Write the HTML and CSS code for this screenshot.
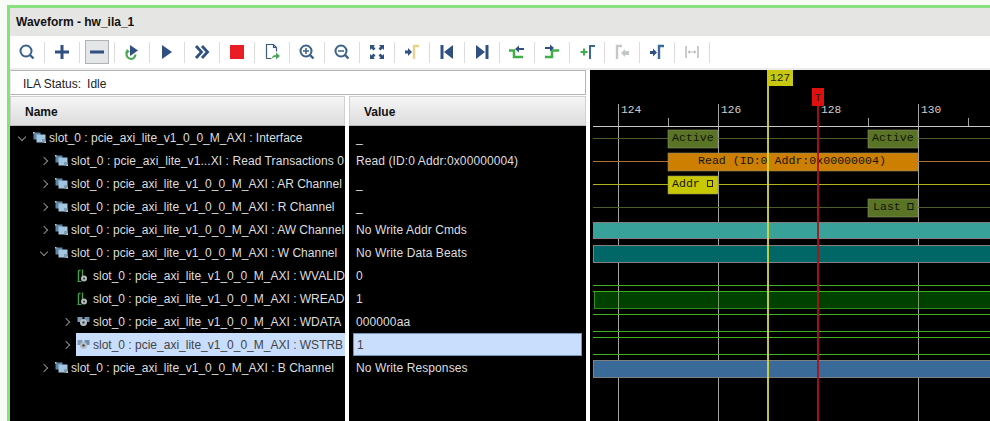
FILE: index.html
```html
<!DOCTYPE html>
<html lang="en">
<head>
    <meta charset="UTF-8">
    <title>Waveform - hw_ila_1</title>
    <link rel="stylesheet" href="styles.css">
</head>
<body>
    <svg class="defs" width="0" height="0">
        <defs>
            <g id="iconBus">
                <rect x="0.500" y="0.500" width="7" height="7" fill="#5d86a6"/>
                <rect x="3.500" y="2.500" width="9" height="8" fill="#a2c6e0"/>
                <rect x="9" y="7" width="3.500" height="3.500" fill="#7e9db4"/>
                <rect x="0" y="0" width="1.500" height="1.500" fill="#c8d0d4"/>
                <rect x="11.500" y="9.500" width="1.500" height="1.500" fill="#c8d0d4"/>
            </g>
            <g id="iconSignal">
                <path d="M1.500 12.500V1.500M1.500 1.500h2M5.500 0.500V7" stroke="#3fa04f" stroke-width="1.400" fill="none"/>
                <path d="M0.500 12.500h4" stroke="#3fa04f" stroke-width="1"/>
                <circle cx="7" cy="9.500" r="3" fill="#b4bcbc"/>
                <circle cx="7" cy="9.500" r="1" fill="#333"/>
            </g>
            <g id="iconVector">
                <rect x="0.500" y="1" width="5" height="5" fill="#7f9ab4"/>
                <rect x="7.500" y="1" width="5" height="5" fill="#6f8eae"/>
                <circle cx="6.500" cy="6.500" r="3.500" fill="#b4bec6"/>
                <circle cx="6.500" cy="6.500" r="1.200" fill="#444"/>
            </g>
        </defs>
    </svg>

    <div class="window">
        <div class="title-bar">Waveform - hw_ila_1</div>

        <div class="toolbar">
            <span class="tool"><svg width="20" height="20" viewBox="0 0 20 20"><circle cx="9" cy="9" r="5.500" fill="none" stroke="#3a6288" stroke-width="2"/><path d="M13 13l3.500 3.500" stroke="#3a6288" stroke-width="2.400"/></svg></span>
            <span class="tool"><svg width="20" height="20" viewBox="0 0 20 20"><path d="M10 3v14M3 10h14" stroke="#2f5080" stroke-width="3"/></svg></span>
            <span class="tool"><span class="tool-active"><svg width="20" height="20" viewBox="0 0 20 20"><path d="M3 10h14" stroke="#2f5080" stroke-width="3"/></svg></span></span>
            <span class="tool"><svg width="20" height="20" viewBox="0 0 20 20"><path d="M5.500 9.500a4.500 4.500 0 1 0 8 3" fill="none" stroke="#4aa858" stroke-width="2.200"/><path d="M3 11l2-4 3 3z" fill="#4aa858"/><path d="M8 3l8 5.500-8 5.500z" fill="#2f5080"/></svg></span>
            <span class="tool"><svg width="20" height="20" viewBox="0 0 20 20"><path d="M5 3l10 7-10 7z" fill="#2f5080"/></svg></span>
            <span class="tool"><svg width="20" height="20" viewBox="0 0 20 20"><path d="M4 4l5.500 6-5.500 6M10 4l5.500 6-5.500 6" fill="none" stroke="#2f5080" stroke-width="2.800"/></svg></span>
            <span class="tool"><svg width="20" height="20" viewBox="0 0 20 20"><rect x="3" y="3" width="14" height="14" fill="#ec1c24"/></svg></span>
            <span class="tool"><svg width="20" height="20" viewBox="0 0 20 20"><path d="M4.500 16.500V2.500h7l3 3v4M11.500 2.500v3h3M4.500 16.500h5" fill="none" stroke="#3a5a80" stroke-width="1.200"/><path d="M10 16.500c0-2.500 1.500-3.500 4-3.500v-2.500l4 3.500-4 3.500V15c-1.500 0-2.800.5-4 1.500z" fill="#4aa858"/></svg></span>
            <span class="tool"><svg width="20" height="20" viewBox="0 0 20 20"><circle cx="9" cy="9" r="5.500" fill="none" stroke="#3a6288" stroke-width="2"/><path d="M13 13l3.500 3.500" stroke="#3a6288" stroke-width="2.400"/><path d="M6 9h6M9 6v6" stroke="#3a6288" stroke-width="1.500"/></svg></span>
            <span class="tool"><svg width="20" height="20" viewBox="0 0 20 20"><circle cx="9" cy="9" r="5.500" fill="none" stroke="#3a6288" stroke-width="2"/><path d="M13 13l3.500 3.500" stroke="#3a6288" stroke-width="2.400"/><path d="M6 9h6" stroke="#3a6288" stroke-width="1.500"/></svg></span>
            <span class="tool"><svg width="20" height="20" viewBox="0 0 20 20"><path d="M3 3h5L6.500 4.500 8.500 6.500 6.500 8.500 4.500 6.500 3 8zM17 3v5l-1.500-1.500-2 2-2-2 2-2L12 3zM3 17v-5l1.500 1.500 2-2 2 2-2 2L8 17zM17 17h-5l1.500-1.500-2-2 2-2 2 2 1.500-1.500z" fill="#2f5080"/></svg></span>
            <span class="tool"><svg width="20" height="20" viewBox="0 0 20 20"><path d="M3 8.500h3V6l4 4-4 4v-2.500H3z" fill="#2f5080"/><path d="M12 17V4h5" fill="none" stroke="#e6d28a" stroke-width="2.400"/></svg></span>
            <span class="tool"><svg width="20" height="20" viewBox="0 0 20 20"><path d="M5 3v14" stroke="#2f5080" stroke-width="3"/><path d="M16 3v14L7 10z" fill="#2f5080"/></svg></span>
            <span class="tool"><svg width="20" height="20" viewBox="0 0 20 20"><path d="M15 3v14" stroke="#2f5080" stroke-width="3"/><path d="M4 3v14l9-7z" fill="#2f5080"/></svg></span>
            <span class="tool"><svg width="20" height="20" viewBox="0 0 20 20"><path d="M2 8.500h5V15h9" fill="none" stroke="#3fae49" stroke-width="2.500"/><path d="M17 6h-5V3.500L8 7l4 3.500V8h5z" fill="#2f5080"/></svg></span>
            <span class="tool"><svg width="20" height="20" viewBox="0 0 20 20"><path d="M3 15h7V8.500h7" fill="none" stroke="#3fae49" stroke-width="2.500"/><path d="M3 5h5V2.500L12 6l-4 3.500V7H3z" fill="#2f5080"/></svg></span>
            <span class="tool"><svg width="20" height="20" viewBox="0 0 20 20"><path d="M7 6.500v7M3.500 10h7" stroke="#3fae49" stroke-width="2"/><path d="M13 17V4h5" fill="none" stroke="#3a6a98" stroke-width="2"/></svg></span>
            <span class="tool"><svg width="20" height="20" viewBox="0 0 20 20"><path d="M5 17V4h5" fill="none" stroke="#c4c8c8" stroke-width="2.400"/><path d="M17 9h-4V7l-4 4 4 4v-2h4z" fill="#c4c8c8"/></svg></span>
            <span class="tool"><svg width="20" height="20" viewBox="0 0 20 20"><path d="M3 9h3V6.500l4 4-4 4V12H3z" fill="#2f5080"/><path d="M12 17V4h5" fill="none" stroke="#3a6a98" stroke-width="2.400"/></svg></span>
            <span class="tool"><svg width="20" height="20" viewBox="0 0 20 20"><path d="M4 4v12M16 4v12" stroke="#c8cccc" stroke-width="2"/><path d="M6 10h8" stroke="#b8bcbc" stroke-width="1"/><path d="M6 10l2-2v4zM14 10l-2-2v4z" fill="#b8bcbc"/></svg></span>
        </div>

        <div class="main">
            <div class="left-pane">
                <div class="status">ILA Status:<span class="status-value">Idle</span></div>
                <div class="columns">
                    <div class="name-col">
                        <div class="col-head">Name</div>
                        <div class="row lvl0"><i class="chev open"></i><svg class="ico" width="13" height="11"><use href="#iconBus"/></svg><span>slot_0 : pcie_axi_lite_v1_0_0_M_AXI : Interface</span></div>
                        <div class="row lvl1"><i class="chev"></i><svg class="ico" width="13" height="11"><use href="#iconBus"/></svg><span class="wide">slot_0 : pcie_axi_lite_v1...XI : Read Transactions 0</span></div>
                        <div class="row lvl1"><i class="chev"></i><svg class="ico" width="13" height="11"><use href="#iconBus"/></svg><span>slot_0 : pcie_axi_lite_v1_0_0_M_AXI : AR Channel</span></div>
                        <div class="row lvl1"><i class="chev"></i><svg class="ico" width="13" height="11"><use href="#iconBus"/></svg><span>slot_0 : pcie_axi_lite_v1_0_0_M_AXI : R Channel</span></div>
                        <div class="row lvl1"><i class="chev"></i><svg class="ico" width="13" height="11"><use href="#iconBus"/></svg><span>slot_0 : pcie_axi_lite_v1_0_0_M_AXI : AW Channel</span></div>
                        <div class="row lvl1"><i class="chev open"></i><svg class="ico" width="13" height="11"><use href="#iconBus"/></svg><span>slot_0 : pcie_axi_lite_v1_0_0_M_AXI : W Channel</span></div>
                        <div class="row lvl2"><i class="chev none"></i><svg class="ico" width="13" height="13"><use href="#iconSignal"/></svg><span>slot_0 : pcie_axi_lite_v1_0_0_M_AXI : WVALID</span></div>
                        <div class="row lvl2"><i class="chev none"></i><svg class="ico" width="13" height="13"><use href="#iconSignal"/></svg><span>slot_0 : pcie_axi_lite_v1_0_0_M_AXI : WREADY</span></div>
                        <div class="row lvl2"><i class="chev"></i><svg class="ico" width="13" height="11"><use href="#iconVector"/></svg><span>slot_0 : pcie_axi_lite_v1_0_0_M_AXI : WDATA</span></div>
                        <div class="row lvl2"><i class="chev"></i><div class="row-sel"><svg class="ico" width="13" height="11"><use href="#iconVector"/></svg><span>slot_0 : pcie_axi_lite_v1_0_0_M_AXI : WSTRB</span></div></div>
                        <div class="row lvl1"><i class="chev"></i><svg class="ico" width="13" height="11"><use href="#iconBus"/></svg><span>slot_0 : pcie_axi_lite_v1_0_0_M_AXI : B Channel</span></div>
                    </div>
                    <div class="value-col">
                        <div class="col-head">Value</div>
                        <div class="val">_</div>
                        <div class="val">Read (ID:0 Addr:0x00000004)</div>
                        <div class="val">_</div>
                        <div class="val">_</div>
                        <div class="val">No Write Addr Cmds</div>
                        <div class="val">No Write Data Beats</div>
                        <div class="val">0</div>
                        <div class="val">1</div>
                        <div class="val">000000aa</div>
                        <div class="val selected">1</div>
                        <div class="val">No Write Responses</div>
                    </div>
                </div>
            </div>

            <div class="wave-pane">
                <svg class="wave" width="400" height="351" viewBox="590 70 400 351">
                    <!-- grid -->
                    <g class="grid">
                        <path d="M618.500 104V421M718.500 104V421M918.500 104V421"/>
                        <path d="M668.500 118V127M868.500 118V127M968.500 118V127"/>
                    </g>
                    <path class="ruler" d="M593 126.500H990"/>
                    <g class="ruler-text">
                        <text x="621" y="113">124</text>
                        <text x="721" y="113">126</text>
                        <text x="821" y="113">128</text>
                        <text x="921" y="113">130</text>
                    </g>

                    <!-- transaction rows -->
                    <path d="M593 138.500H990" stroke="#4a5c28"/>
                    <path d="M593 161.500H990" stroke="#a87238"/>
                    <path d="M593 184.500H990" stroke="#b0b41c"/>
                    <path d="M593 207.500H990" stroke="#4a5c28"/>

                    <rect class="box" x="668" y="130" width="50" height="18" fill="#5a7426"/>
                    <rect class="box" x="868" y="130" width="50" height="18" fill="#5a7426"/>
                    <rect class="box" x="668" y="153" width="250" height="18" fill="#cc7f00"/>
                    <rect class="box" x="668" y="176" width="50" height="18" fill="#c8c800"/>
                    <rect class="box" x="868" y="199" width="50" height="18" fill="#5a7426"/>

                    <g class="box-text">
                        <text x="672" y="141">Active</text>
                        <text x="872" y="141">Active</text>
                        <text x="698" y="164">Read (ID:0 Addr:0x00000004)</text>
                        <text x="672" y="187">Addr</text>
                        <text x="873" y="210">Last</text>
                    </g>
                    <rect x="707.500" y="180.500" width="5" height="6" fill="none" stroke="#222"/>
                    <rect x="908" y="203.500" width="5" height="6" fill="none" stroke="#111"/>

                    <!-- bus rows -->
                    <rect class="bar" x="593.500" y="222.500" width="397" height="16" fill="#38a29a"/>
                    <rect class="bar" x="593.500" y="245.500" width="397" height="17" fill="#006666"/>
                    <rect x="594.500" y="291.500" width="396" height="17" fill="#004000" stroke="#2f8f1f"/>
                    <path class="green" d="M593 285.500H990M593 291.500H990M593 314.500H990M593 331.500H990M593 337.500H990M593 354.500H990"/>
                    <rect class="bar" x="593.500" y="360.500" width="397" height="17" fill="#3a6a98"/>
                    <path class="grid-over" d="M618.500 291V309M718.500 291V309M918.500 291V309"/>

                    <!-- markers -->
                    <rect class="cursor-yellow" x="767" y="70" width="2" height="351"/>
                    <rect x="767" y="70" width="26" height="16" fill="#c8c810"/>
                    <text class="marker-text" x="770" y="81">127</text>
                    <rect class="cursor-red" x="817" y="105" width="2" height="316"/>
                    <rect x="812" y="88" width="12" height="18" fill="#e01010"/>
                    <text class="marker-text" x="814.500" y="101">T</text>
                </svg>
            </div>
        </div>
    </div>
</body>
</html>
```

FILE: styles.css
```css
html, body {
    margin: 0;
    padding: 0;
    height: 421px;
    overflow: hidden;
}
body {
    background-color: #f7fdf6;
    font-family: "Liberation Sans", Arial, sans-serif;
    font-size: 12px;
    padding: 5px 0 0 7px;
    box-sizing: border-box;
}
.defs {
    display: block;
    height: 0;
}
.window {
    border-top: 3px solid #88e080;
    border-left: 3px solid #88e080;
    background-color: #ececec;
    height: 413px;
    overflow: hidden;
}
.title-bar {
    height: 28px;
    line-height: 29px;
    padding-left: 6px;
    background-color: #e5e5e3;
    color: #111;
    font-weight: bold;
}
.toolbar {
    display: flex;
    align-items: center;
    height: 32px;
    background-color: #fff;
}
.tool {
    display: flex;
    align-items: center;
    justify-content: center;
    box-sizing: border-box;
    width: 35px;
    height: 21px;
    border-right: 1px solid #dcdcdc;
    padding-right: 1px;
}
.tool-active {
    display: flex;
    align-items: center;
    justify-content: center;
    flex: none;
    width: 24px;
    height: 24px;
    box-sizing: border-box;
    background-color: #e4e6e8;
    border: 1px solid #b0b4b8;
}
.main {
    display: flex;
    height: 351px;
    margin-top: 2px;
    background-color: #fff;
}
.left-pane {
    width: 576px;
    flex: none;
}
.status {
    box-sizing: border-box;
    height: 25px;
    line-height: 26px;
    padding-left: 12px;
    border: 1px solid #b4b4b4;
    border-left-color: #e8e8e8;
    background-color: #fff;
    color: #222;
}
.status-value {
    margin-left: 6px;
}
.columns {
    display: flex;
    justify-content: space-between;
    margin-top: 1px;
}
.name-col {
    width: 335px;
    height: 325px;
    background-color: #000;
    overflow: hidden;
}
.value-col {
    width: 237px;
    height: 325px;
    background-color: #000;
    overflow: hidden;
}
.col-head {
    box-sizing: border-box;
    height: 30px;
    line-height: 30px;
    padding-left: 14px;
    background: linear-gradient(#f6f6f6, #dcdcde);
    border: 1px solid #d0d0d0;
    border-bottom: 1px solid #b8b8b8;
    color: #111;
    font-weight: bold;
}
.row {
    display: flex;
    align-items: center;
    height: 23px;
    color: #dedede;
    white-space: nowrap;
    overflow: hidden;
}
.lvl0 { padding-left: 9px; }
.lvl1 { padding-left: 31px; }
.lvl2 { padding-left: 53px; }
.wide {
    letter-spacing: 0.080px;
}
.chev {
    flex: none;
    display: block;
    box-sizing: border-box;
    width: 6px;
    height: 6px;
    margin-right: 8px;
    border-top: 1px solid #8c8c8c;
    border-right: 1px solid #8c8c8c;
    transform: rotate(45deg);
}
.chev.open {
    transform: translateY(-1px) rotate(135deg);
}
.chev.none {
    visibility: hidden;
}
.ico {
    flex: none;
    margin-right: 3px;
}
.row-sel {
    display: flex;
    align-items: center;
    flex: 1;
    height: 23px;
    margin-left: -1px;
    padding-left: 1px;
    background-color: #c9defc;
    color: #444;
}
.val {
    box-sizing: border-box;
    height: 23px;
    line-height: 25px;
    padding-left: 7px;
    color: #dedede;
    letter-spacing: 0.100px;
}
.val.selected {
    width: 229px;
    margin-left: 4px;
    padding-left: 3px;
    background-color: #c9defc;
    border: 1px solid #6f96b8;
    line-height: 22px;
    color: #444;
}
.wave-pane {
    flex: 1;
    margin-left: 4px;
    background-color: #000;
}
.wave {
    display: block;
}
.grid path {
    stroke: #a4a4a4;
    fill: none;
}
.grid-over {
    stroke: #7c9c70;
    fill: none;
}
.ruler {
    stroke: #c8c8c8;
}
.ruler-text text {
    font-family: "Liberation Mono", monospace;
    font-size: 11.200px;
    fill: #cfcfcf;
}
.box {
    stroke: #8c8c70;
    stroke-width: 0.600;
}
.box-text text {
    font-family: "Liberation Mono", monospace;
    font-size: 11.600px;
    fill: #151505;
}
.bar {
    stroke: #808080;
    stroke-width: 1;
}
.green {
    stroke: #3fb01f;
    fill: none;
}
.cursor-yellow {
    fill: #d8d840;
    opacity: 0.9;
}
.cursor-red {
    fill: #b01018;
    opacity: 0.9;
}
.marker-text {
    font-family: "Liberation Mono", monospace;
    font-size: 11.200px;
    fill: #222;
}
```
